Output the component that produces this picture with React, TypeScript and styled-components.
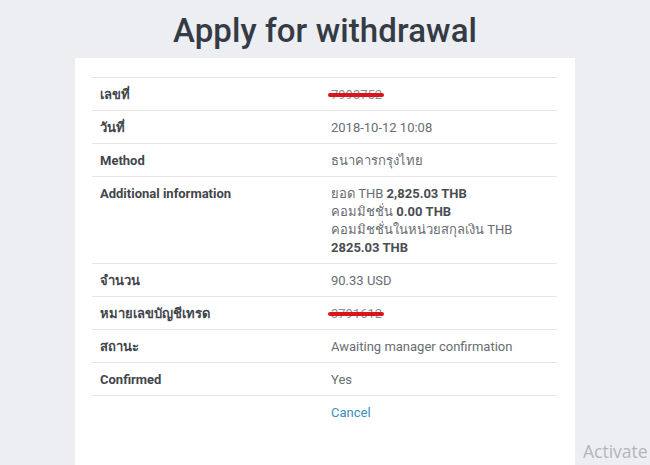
import React from 'react'
import styled,{createGlobalStyle} from 'styled-components'

const PAGE_BG='#eceef1'
const BORDER='#e4e6e9'

interface IRow{
    label:string;
    value?:React.ReactNode;
    redacted?:string;
}

const rows:IRow[]=[
    {label:'เลขที่',redacted:'7993752'},
    {label:'วันที่',value:'2018-10-12 10:08'},
    {label:'Method',value:'ธนาคารกรุงไทย'},
    {label:'Additional information',value:(
        <>
            ยอด THB <b>2,825.03 THB</b><br/>
            คอมมิชชั่น <b>0.00 THB</b><br/>
            คอมมิชชั่นในหน่วยสกุลเงิน THB<br/>
            <b>2825.03 THB</b>
        </>
    )},
    {label:'จำนวน',value:'90.33 USD'},
    {label:'หมายเลขบัญชีเทรด',redacted:'3791612'},
    {label:'สถานะ',value:'Awaiting manager confirmation'},
    {label:'Confirmed',value:'Yes'},
]

export default function App():React.ReactElement{
    return (
        <>
            <GlobalStyle/>
            <Page>
                <Title>Apply for withdrawal</Title>
                <Card>
                    <Table>
                        <tbody>
                            {rows.map(row=>(
                                <Row key={row.label}>
                                    <Label>{row.label}</Label>
                                    <Value>
                                        {row.redacted?<Redacted>{row.redacted}<Scribble/></Redacted>:row.value}
                                    </Value>
                                </Row>
                            ))}
                            <Row>
                                <Label/>
                                <Value><CancelLink href='#'>Cancel</CancelLink></Value>
                            </Row>
                        </tbody>
                    </Table>
                </Card>
                <Watermark>Activate</Watermark>
            </Page>
        </>
    )
}

const GlobalStyle=createGlobalStyle`
html,body{
margin:0;
padding:0;
background:${PAGE_BG};
}
body{
font-family:Roboto,"Noto Sans","DejaVu Sans",sans-serif;
}
`

const Page=styled.div`
position:relative;
width:650px;
height:465px;
overflow:hidden;
background:${PAGE_BG};
display:flex;
flex-direction:column;
align-items:center;
`

const Title=styled.h1`
margin:0;
box-sizing:border-box;
height:58px;
padding-top:4px;
line-height:54px;
font-size:33px;
font-weight:500;
color:#353b45;
letter-spacing:0.1px;
`

const Card=styled.div`
width:500px;
flex:1;
box-sizing:border-box;
background:#fff;
padding:19px 18px 0 17px;
`

const Table=styled.table`
width:100%;
border-collapse:collapse;
font-size:13px;
line-height:18px;
`

const Row=styled.tr`
border-top:1px solid ${BORDER};
`

const Label=styled.td`
width:215px;
padding:8px 8px 6px;
vertical-align:top;
font-weight:700;
color:#42464c;
`

const Value=styled.td`
padding:8px 8px 6px;
vertical-align:top;
color:#6a6d72;
b{
color:#4a4d52;
}
`

const Redacted=styled.span`
position:relative;
display:inline-block;
color:#8a8d92;
`

const Scribble=styled.span`
position:absolute;
left:-3px;
right:-2px;
top:7px;
height:4px;
border-radius:2px;
background:#d9141b;
`

const CancelLink=styled.a`
color:#3b8ec2;
text-decoration:none;
`

const Watermark=styled.div`
position:absolute;
left:583px;
top:439px;
font-size:17.5px;
color:#b3b6bb;
white-space:nowrap;
font-family:"Open Sans","Noto Sans",sans-serif;
`
